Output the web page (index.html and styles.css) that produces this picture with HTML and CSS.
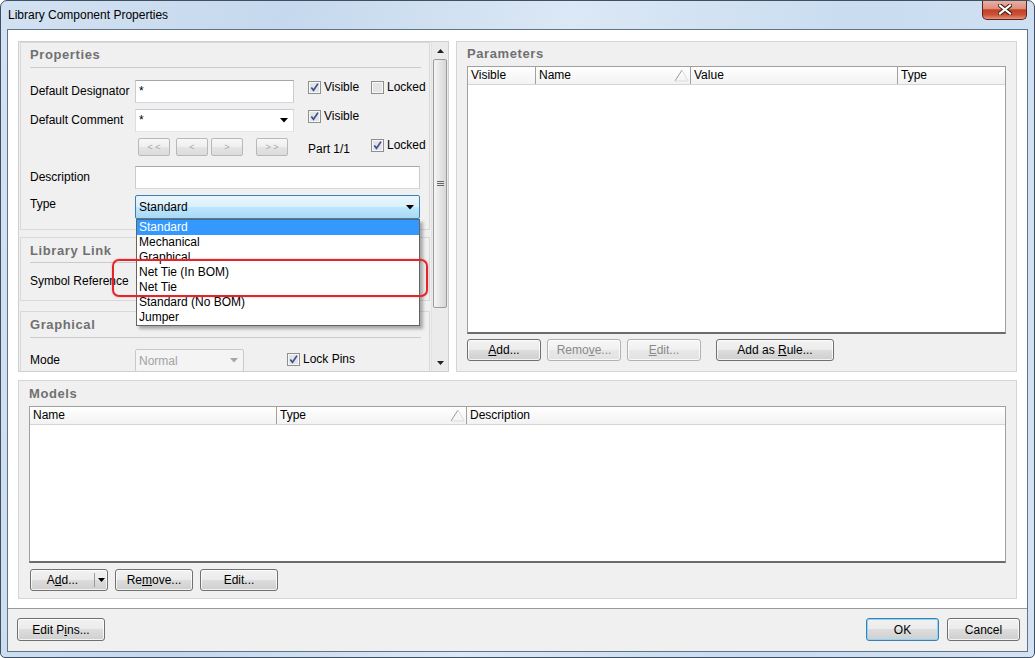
FILE: index.html
```html
<!DOCTYPE html>
<html>
<head>
<meta charset="utf-8">
<link rel="stylesheet" href="styles.css">
</head>
<body>
<div class="window">
  <div class="titlebar">
    <span class="title">Library Component Properties</span>
    <div class="close">
      <svg width="14" height="11" viewBox="0 0 14 11"><path d="M2 1.5 L12 9.5 M12 1.5 L2 9.5" stroke="#3b1a10" stroke-width="4.2" stroke-linecap="square"/><path d="M2 1.5 L12 9.5 M12 1.5 L2 9.5" stroke="#fff" stroke-width="2.2" stroke-linecap="square"/></svg>
    </div>
  </div>
  <div class="client">
    <div class="main">
      <div class="toprow">
        <div class="scrollbox">
          <div class="scrollcontent">
            <div class="group g-props">
              <div class="ghead">Properties</div>
              <div class="row r-first">
                <div class="lbl">Default Designator</div>
                <div class="edit w159">*</div>
                <div class="checks">
                  <span class="chk c63"><svg class="cbx" width="13" height="13" viewBox="0 0 13 13"><rect x=".5" y=".5" width="12" height="12" fill="#f7f7f7" stroke="#8e8f8f"/><rect x="2" y="2" width="9" height="9" fill="#e4e4e4"/><path d="M3.3 6.4 L5.5 9.3 L10 2.6" stroke="#3b4f95" stroke-width="1.7" fill="none"/></svg>Visible</span>
                  <span class="chk"><svg class="cbx" width="13" height="13" viewBox="0 0 13 13"><rect x=".5" y=".5" width="12" height="12" fill="#f7f7f7" stroke="#8e8f8f"/><rect x="2" y="2" width="9" height="9" fill="#e4e4e4"/></svg>Locked</span>
                </div>
              </div>
              <div class="row r-gap6">
                <div class="lbl">Default Comment</div>
                <div class="edit combo w159"><span>*</span><svg class="arr" width="8" height="5" viewBox="0 0 8 5"><path d="M0 0 H8 L4 4.5 Z" fill="#000"/></svg></div>
                <div class="checks">
                  <span class="chk c63"><svg class="cbx" width="13" height="13" viewBox="0 0 13 13"><rect x=".5" y=".5" width="12" height="12" fill="#f7f7f7" stroke="#8e8f8f"/><rect x="2" y="2" width="9" height="9" fill="#e4e4e4"/><path d="M3.3 6.4 L5.5 9.3 L10 2.6" stroke="#3b4f95" stroke-width="1.7" fill="none"/></svg>Visible</span>
                </div>
              </div>
              <div class="row r-nav">
                <div class="navbtns">
                  <span class="nbtn">&lt; &lt;</span>
                  <span class="nbtn n2">&lt;</span>
                  <span class="nbtn n3">&gt;</span>
                  <span class="nbtn n4">&gt; &gt;</span>
                </div>
                <span class="part">Part 1/1</span>
                <span class="chk chk-part"><svg class="cbx" width="13" height="13" viewBox="0 0 13 13"><rect x=".5" y=".5" width="12" height="12" fill="#f7f7f7" stroke="#8e8f8f"/><rect x="2" y="2" width="9" height="9" fill="#e4e4e4"/><path d="M3.3 6.4 L5.5 9.3 L10 2.6" stroke="#3b4f95" stroke-width="1.7" fill="none"/></svg>Locked</span>
              </div>
              <div class="row r-desc">
                <div class="lbl">Description</div>
                <div class="edit w285"></div>
              </div>
              <div class="row r-type">
                <div class="lbl lbl-top">Type</div>
                <div class="typecombo w285"><span>Standard</span><svg class="arr" width="8" height="5" viewBox="0 0 8 5"><path d="M0 0 H8 L4 4.5 Z" fill="#000"/></svg></div>
              </div>
            </div>
            <div class="group g-link">
              <div class="ghead gh2">Library Link</div>
              <div class="row r-sym">
                <div class="lbl lbl-top">Symbol Reference</div>
              </div>
            </div>
            <div class="group g-graph">
              <div class="ghead gh3">Graphical</div>
              <div class="row r-mode">
                <div class="lbl">Mode</div>
                <div class="disselect"><span>Normal</span><svg class="arr" width="8" height="5" viewBox="0 0 8 5"><path d="M0 0 H8 L4 4.5 Z" fill="#a6a6a6"/></svg></div>
                <span class="chk chk-lock"><svg class="cbx" width="13" height="13" viewBox="0 0 13 13"><rect x=".5" y=".5" width="12" height="12" fill="#f7f7f7" stroke="#8e8f8f"/><rect x="2" y="2" width="9" height="9" fill="#e4e4e4"/><path d="M3.3 6.4 L5.5 9.3 L10 2.6" stroke="#3b4f95" stroke-width="1.7" fill="none"/></svg>Lock Pins</span>
              </div>
            </div>
          </div>
          <div class="vscroll">
            <div class="sbbtn"><svg width="7" height="4" viewBox="0 0 7 4"><path d="M0 4 H7 L3.5 0 Z" fill="#222"/></svg></div>
            <div class="thumb"><svg width="7" height="6" viewBox="0 0 7 6"><path d="M0 .5 H7 M0 2.5 H7 M0 4.5 H7" stroke="#666" stroke-width="1"/></svg></div>
            <div class="sbspace"></div>
            <div class="sbbtn"><svg width="7" height="4" viewBox="0 0 7 4"><path d="M0 0 H7 L3.5 4 Z" fill="#222"/></svg></div>
          </div>
          <div class="droplist">
            <div class="item sel">Standard</div>
            <div class="item">Mechanical</div>
            <div class="item">Graphical</div>
            <div class="item">Net Tie (In BOM)</div>
            <div class="item">Net Tie</div>
            <div class="item">Standard (No BOM)</div>
            <div class="item">Jumper</div>
          </div>
          <div class="redbox"></div>
        </div>
        <div class="panel params">
          <div class="phead">Parameters</div>
          <div class="table ptable">
            <div class="thead">
              <div class="th pc1">Visible</div>
              <div class="th pc2">Name<svg class="sorttri" width="15" height="13" viewBox="0 0 15 13"><path d="M1 12 L8 1" stroke="#9a9a9a" stroke-width="1" fill="none"/><path d="M8 1 L14 12 L1 12" stroke="#dcdcdc" stroke-width="1" fill="none"/></svg></div>
              <div class="th pc3">Value</div>
              <div class="th pc4">Type</div>
            </div>
            <div class="tbody"></div>
          </div>
          <div class="btnrow">
            <div class="btn b74"><span><u>A</u>dd...</span></div>
            <div class="btn b74 dis ml6"><span>Remo<u>v</u>e...</span></div>
            <div class="btn b74 dis ml6"><span><u>E</u>dit...</span></div>
            <div class="btn b118 ml15"><span>Add as <u>R</u>ule...</span></div>
          </div>
        </div>
      </div>
      <div class="panel models">
        <div class="phead">Models</div>
        <div class="table mtable">
          <div class="thead">
            <div class="th mc1">Name</div>
            <div class="th mc2">Type<svg class="sorttri" width="15" height="13" viewBox="0 0 15 13"><path d="M1 12 L8 1" stroke="#9a9a9a" stroke-width="1" fill="none"/><path d="M8 1 L14 12 L1 12" stroke="#dcdcdc" stroke-width="1" fill="none"/></svg></div>
            <div class="th mc3">Description</div>
          </div>
          <div class="tbody"></div>
        </div>
        <div class="btnrow mbtns">
          <div class="btn split"><span class="splitmain">A<u>d</u>d...</span><span class="splitarr"><svg width="7" height="4" viewBox="0 0 7 4"><path d="M0 0 H7 L3.5 4 Z" fill="#000"/></svg></span></div>
          <div class="btn b78 ml7"><span>Re<u>m</u>ove...</span></div>
          <div class="btn b78 ml7"><span>Edit...</span></div>
        </div>
      </div>
    </div>
    <div class="footer">
      <div class="btn fbtn editpins"><span>Edit P<u>i</u>ns...</span></div>
      <div class="btn fbtn ok"><span>OK</span></div>
      <div class="btn fbtn cancel"><span>Cancel</span></div>
    </div>
  </div>
</div>
</body>
</html>
```
FILE: styles.css
```css
body {
  margin: 0;
  font-family: "Liberation Sans", Arial, sans-serif;
  font-size: 12px;
  color: #000;
  background: #fff;
}
.window {
  width: 1035px;
  height: 658px;
  box-sizing: border-box;
  border: 1px solid #3f5064;
  border-radius: 7px 7px 5px 5px;
  background: linear-gradient(100deg, #d3e2f2 0%, #c5d8ed 25%, #dbe8f5 50%, #c9dcf0 75%, #d4e3f3 100%);
  display: flex;
  flex-direction: column;
  overflow: hidden;
}
.titlebar {
  height: 28px;
  flex: none;
  display: flex;
  align-items: flex-start;
}
.title {
  margin-left: 7px;
  margin-top: 7px;
  line-height: 15px;
}
.close {
  margin-left: auto;
  margin-right: 7px;
  margin-top: -1px;
  width: 45px;
  height: 20px;
  box-sizing: border-box;
  border: 1px solid #5a2416;
  border-top: none;
  border-radius: 0 0 5px 5px;
  background: linear-gradient(#ebb4a6 0%, #de8f7b 45%, #c33f27 52%, #cb5236 78%, #e39580 100%);
  display: flex;
  align-items: center;
  justify-content: center;
}
.client {
  flex: 1;
  margin: 0 6px 5px 6px;
  border: 1px solid #5f7389;
  background: #fff;
  display: flex;
  flex-direction: column;
}
.main {
  height: 578px;
  flex: none;
  box-sizing: border-box;
  padding: 11px 10px 9px 10px;
  display: flex;
  flex-direction: column;
}
.toprow {
  display: flex;
  height: 331px;
  flex: none;
}
.scrollbox {
  width: 431px;
  height: 331px;
  box-sizing: border-box;
  border: 1px solid #cfcfcf;
  display: flex;
  position: relative;
  overflow: hidden;
  background: #f0f0f0;
}
.scrollcontent {
  width: 412px;
  flex: none;
  padding: 0 1px;
  box-sizing: border-box;
  overflow: hidden;
}
.group {
  box-sizing: border-box;
  border: 1px solid #d9d9d9;
  background: #f0f0f0;
  padding: 0 8px 0 9px;
}
.g-props { height: 188px; }
.g-link { height: 64px; margin-top: 7px; }
.g-graph { height: 90px; margin-top: 10px; }
.ghead {
  height: 20px;
  padding-top: 4px;
  line-height: 16px;
  border-bottom: 1px solid #cbcbcb;
  font-size: 13px;
  font-weight: bold;
  letter-spacing: 0.6px;
  color: #707070;
}
.gh2 { padding-top: 5px; height: 19px; }
.gh3 { padding-top: 5px; height: 20px; }
.row {
  display: flex;
  align-items: flex-start;
}
.r-first { margin-top: 12px; height: 23px; }
.r-gap6 { margin-top: 6px; height: 23px; }
.r-nav { margin-top: 6px; height: 18px; }
.r-desc { margin-top: 10px; height: 23px; }
.r-type { margin-top: 6px; height: 24px; }
.r-sym { margin-top: 9px; height: 18px; }
.r-mode { margin-top: 11px; height: 23px; }
.lbl {
  width: 105px;
  flex: none;
  line-height: 23px;
  white-space: nowrap;
}
.lbl-top { line-height: 18px; }
.edit {
  box-sizing: border-box;
  height: 23px;
  border: 1px solid #abadb3;
  border-color: #a4a6ad #c9ccd2 #d4d8de #c9ccd2;
  background: #fff;
  padding: 0 3px;
  line-height: 21px;
  flex: none;
}
.w159 { width: 159px; }
.w285 { width: 285px; }
.combo {
  display: flex;
  align-items: center;
  justify-content: space-between;
  padding-right: 5px;
  border-color: #c9ccd2 #dadde2 #e3e6ea #dadde2;
}
.combo span { line-height: 21px; align-self: flex-start; }
.checks {
  display: flex;
  margin-left: 14px;
  margin-top: 1px;
}
.chk {
  display: flex;
  align-items: center;
  line-height: 13px;
  white-space: nowrap;
}
.c63 { width: 63px; }
.cbx { flex: none; margin-right: 3px; }
.navbtns {
  display: flex;
  margin-left: 108px;
  width: 150px;
  flex: none;
}
.nbtn {
  box-sizing: border-box;
  width: 32px;
  height: 18px;
  border: 1px solid #b5b9bc;
  border-radius: 2px;
  background: linear-gradient(#f7f7f7 0%, #efefef 49%, #e4e4e4 50%, #dcdcdc 100%);
  color: #a9a9a9;
  font-size: 9px;
  display: flex;
  align-items: center;
  justify-content: center;
  flex: none;
}
.n2 { margin-left: 6px; }
.n3 { margin-left: 3px; }
.n4 { margin-left: 13px; }
.part {
  margin-left: 20px;
  width: 63px;
  flex: none;
  margin-top: 4px;
  line-height: 14px;
}
.chk-part { margin-top: 1px; }
.typecombo {
  box-sizing: border-box;
  height: 24px;
  border: 1px solid #3c7fb1;
  border-radius: 2px;
  background: linear-gradient(#eaf6fd 0%, #d9f0fc 48%, #bee6fd 52%, #a7d9f5 100%);
  display: flex;
  align-items: center;
  justify-content: space-between;
  padding: 0 5px 0 3px;
  flex: none;
}
.disselect {
  box-sizing: border-box;
  width: 109px;
  height: 23px;
  border: 1px solid #c7c9cc;
  border-radius: 2px;
  background: #f4f4f4;
  color: #a3a3a3;
  display: flex;
  align-items: center;
  justify-content: space-between;
  padding: 0 5px 0 3px;
  flex: none;
}
.chk-lock { margin-left: 43px; margin-top: 4px; }
.vscroll {
  width: 17px;
  flex: none;
  background: #ebebeb;
  border-left: 1px solid #e2e2e2;
  box-sizing: border-box;
  display: flex;
  flex-direction: column;
}
.sbbtn {
  height: 17px;
  flex: none;
  display: flex;
  align-items: center;
  justify-content: center;
}
.thumb {
  height: 249px;
  flex: none;
  margin: 0 1px 0 1px;
  box-sizing: border-box;
  border: 1px solid #9b9b9b;
  border-radius: 2px;
  background: linear-gradient(to right, #f5f5f5, #e6e6e6 50%, #d6d6d6);
  display: flex;
  align-items: center;
  justify-content: center;
}
.sbspace { flex: 1; }
.droplist {
  position: absolute;
  left: 117px;
  top: 177px;
  width: 284px;
  box-sizing: border-box;
  border: 1px solid #646464;
  background: #fff;
  box-shadow: 3px 3px 3px rgba(0, 0, 0, 0.3);
}
.item {
  height: 15px;
  line-height: 15px;
  padding-left: 2px;
  white-space: nowrap;
}
.item.sel {
  background: #3399ff;
  color: #fff;
}
.redbox {
  position: absolute;
  left: 93px;
  top: 217px;
  width: 316px;
  height: 38px;
  box-sizing: border-box;
  border: 2px solid #e5242a;
  border-radius: 7px;
  box-shadow: 0 0 2px rgba(229, 36, 42, 0.45);
}
.panel {
  box-sizing: border-box;
  border: 1px solid #d5d5d5;
  background: #f0f0f0;
  padding: 4px 10px 0 10px;
  display: flex;
  flex-direction: column;
}
.params {
  width: 561px;
  height: 331px;
  margin-left: 7px;
}
.models {
  width: 999px;
  height: 219px;
  margin-top: 8px;
  padding-top: 5px;
}
.phead {
  height: 16px;
  line-height: 16px;
  font-size: 13px;
  font-weight: bold;
  letter-spacing: 0.6px;
  color: #707070;
  flex: none;
}
.table {
  box-sizing: border-box;
  border: 1px solid #a0a0a0;
  border-bottom: 2px solid #6c6c6c;
  background: #fff;
  display: flex;
  flex-direction: column;
  flex: none;
}
.ptable { height: 268px; margin-top: 4px; }
.mtable { height: 157px; margin-top: 4px; }
.thead {
  height: 17px;
  display: flex;
  background: linear-gradient(#ffffff, #f2f2f2);
  border-bottom: 1px solid #d5d5d5;
  flex: none;
}
.th {
  box-sizing: border-box;
  line-height: 17px;
  padding-left: 3px;
  border-left: 1px solid #a0a0a0;
  position: relative;
  white-space: nowrap;
  flex: none;
}
.pc1 { width: 67px; border-left: none; }
.pc2 { width: 155px; }
.pc3 { width: 207px; }
.pc4 { flex: 1; }
.mc1 { width: 246px; border-left: none; }
.mc2 { width: 190px; }
.mc3 { flex: 1; }
.sorttri {
  position: absolute;
  right: 1px;
  top: 2px;
}
.tbody { flex: 1; }
.btnrow {
  display: flex;
  margin-top: 5px;
}
.mbtns { margin-top: 6px; margin-left: 1px; }
.btn {
  box-sizing: border-box;
  height: 22px;
  border: 1px solid #707070;
  border-radius: 3px;
  background: linear-gradient(#f2f2f2 0%, #ebebeb 49%, #dddddd 50%, #cfcfcf 100%);
  box-shadow: inset 0 0 0 1px rgba(255, 255, 255, 0.75);
  display: flex;
  align-items: center;
  justify-content: center;
  flex: none;
  white-space: nowrap;
}
.btn.dis {
  border-color: #adb2b5;
  background: linear-gradient(#f6f6f6 0%, #f0f0f0 49%, #e8e8e8 50%, #e2e2e2 100%);
  color: #8a8a8a;
}
.b74 { width: 74px; }
.b78 { width: 78px; }
.b118 { width: 118px; }
.ml6 { margin-left: 6px; }
.ml7 { margin-left: 7px; }
.ml15 { margin-left: 15px; }
.split {
  width: 78px;
  justify-content: flex-start;
}
.splitmain {
  width: 63px;
  text-align: center;
  border-right: 1px solid #9a9a9a;
  line-height: 14px;
}
.splitarr {
  flex: 1;
  display: flex;
  justify-content: center;
}
.footer {
  flex: 1;
  border-top: 1px solid #9b9b9b;
  background: #f0f0f0;
  display: flex;
  box-sizing: border-box;
  padding: 9px 7px 0 9px;
}
.fbtn { height: 23px; }
.editpins { width: 88px; }
.ok {
  width: 73px;
  margin-left: auto;
  border-color: #3c7fb1;
  box-shadow: inset 0 0 0 1px #8fd6f6;
}
.cancel { width: 73px; margin-left: 8px; }
u { text-decoration: underline; }
```
